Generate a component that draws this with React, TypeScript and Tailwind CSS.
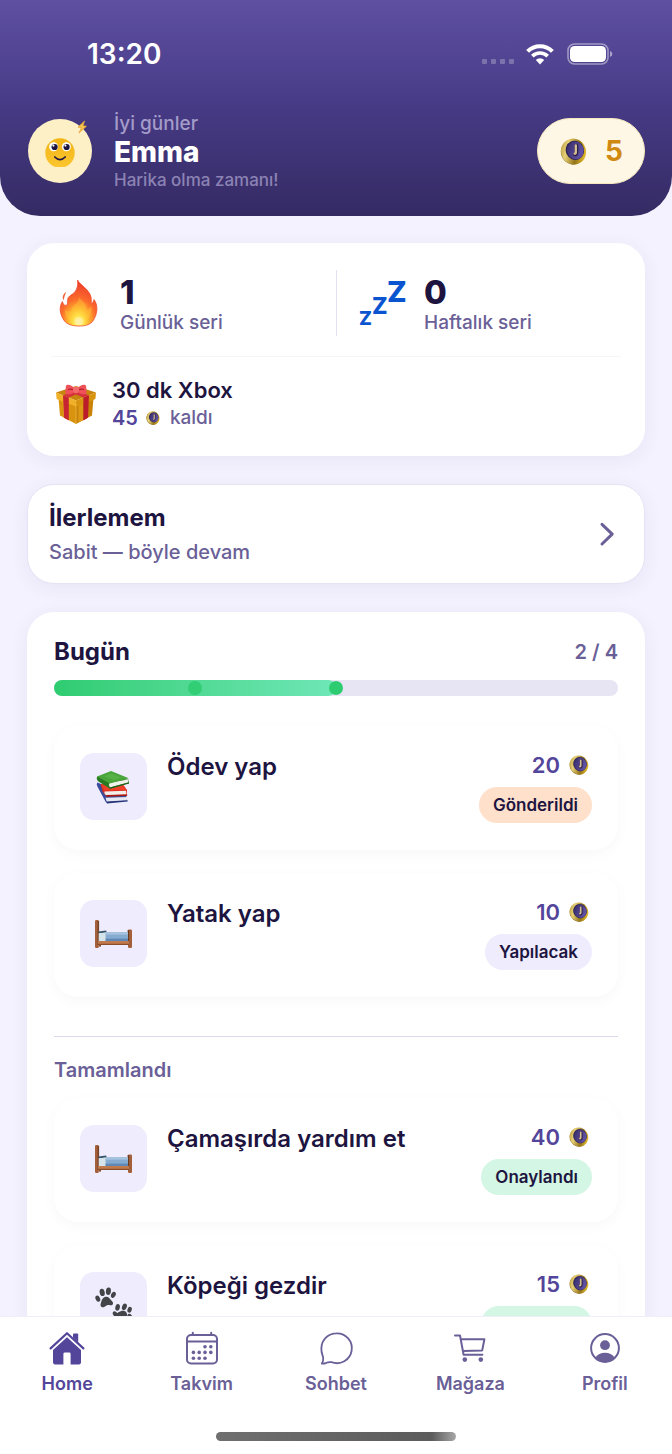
import { useId, type ReactNode } from "react";

type Status = "sent" | "todo" | "approved";

interface Task {
  id: number;
  title: string;
  coins: number;
  status: Status;
  icon: ReactNode;
}

const statusLabel: Record<Status, string> = {
  sent: "Gönderildi",
  todo: "Yapılacak",
  approved: "Onaylandı",
};

const statusColor: Record<Status, string> = {
  sent: "bg-[#fee0cb]",
  todo: "bg-[#eeecfd]",
  approved: "bg-[#d4f6e4]",
};

function Coin({ className }: { className: string }) {
  const id = useId();
  return (
    <svg viewBox="0 0 28 28" className={className} aria-hidden="true">
      <defs>
        <linearGradient id={id + "rim"} x1="0" y1="0" x2="1" y2="1">
          <stop offset="0" stopColor="#a98a2c" />
          <stop offset="0.3" stopColor="#e6cf76" />
          <stop offset="0.6" stopColor="#94741a" />
          <stop offset="0.85" stopColor="#e3bb2c" />
          <stop offset="1" stopColor="#a07c1c" />
        </linearGradient>
        <linearGradient id={id + "face"} x1="0" y1="0" x2="1" y2="1">
          <stop offset="0" stopColor="#352a68" />
          <stop offset="1" stopColor="#6c5cb4" />
        </linearGradient>
      </defs>
      <ellipse cx="13.4" cy="14.6" rx="12.4" ry="13" fill="#8a6d1e" transform="rotate(-30 13.4 14.6)" />
      <ellipse cx="14" cy="14" rx="12.8" ry="13.6" fill={`url(#${id}rim)`} transform="rotate(-30 14 14)" />
      <ellipse cx="15.4" cy="12.8" rx="9.4" ry="10" fill="#2c2354" transform="rotate(-24 15.4 12.8)" />
      <ellipse cx="15.9" cy="12.8" rx="8.6" ry="9.2" fill={`url(#${id}face)`} transform="rotate(-24 15.9 12.8)" />
      <path d="M17 8V15.4Q16.8 17.2 15.6 17" fill="none" stroke="#2a2048" strokeWidth="4" strokeLinecap="round" />
      <path d="M16.4 7.6V15Q16.2 16.4 15.2 16.2" fill="none" stroke="#d6c092" strokeWidth="2.4" strokeLinecap="round" />
    </svg>
  );
}

function Avatar() {
  return (
    <div className="relative flex size-16 shrink-0 items-center justify-center rounded-full bg-[#fdf0c6]">
      <svg viewBox="0 0 32 32" className="size-8" aria-hidden="true">
        <defs>
          <linearGradient id="face" x1="0" y1="0" x2="0" y2="1">
            <stop offset="0" stopColor="#f2b416" />
            <stop offset="1" stopColor="#fbc62f" />
          </linearGradient>
        </defs>
        <circle cx="16" cy="18" r="14.7" fill="url(#face)" />
        <circle cx="9.6" cy="11.8" r="4.5" fill="#fff" />
        <circle cx="22.4" cy="11.8" r="4.5" fill="#fff" />
        <circle cx="10.6" cy="12" r="3.1" fill="#1d1440" />
        <circle cx="22.6" cy="12" r="3.1" fill="#1d1440" />
        <circle cx="9.4" cy="10.6" r="1.1" fill="#fff" />
        <circle cx="21.4" cy="10.6" r="1.1" fill="#fff" />
        <path d="M10.8 22Q16 27.4 21.2 22" fill="none" stroke="#1d1440" strokeWidth="1.7" strokeLinecap="round" />
      </svg>
      <svg viewBox="0 0 12 14" className="absolute right-1 top-px h-3.5 w-3" aria-hidden="true">
        <path d="M8.6 1 2 7.2 5.4 7.6 3 13 10.4 6.2 6.9 5.8Z" fill="#f7c948" stroke="#e9a23b" strokeWidth="0.8" strokeLinejoin="round" />
      </svg>
    </div>
  );
}

function Flame() {
  return (
    <svg viewBox="0 0 48 48" className="size-12" aria-hidden="true">
      <defs>
        <radialGradient id="flame" cx="0.5" cy="0.9" r="0.8">
          <stop offset="0" stopColor="#fffbd0" />
          <stop offset="0.16" stopColor="#ffea4e" />
          <stop offset="0.36" stopColor="#ffb02e" />
          <stop offset="0.62" stopColor="#fb6a2b" />
          <stop offset="1" stopColor="#f0442c" />
        </radialGradient>
      </defs>
      <path d="M11.3 12.5Q6 17 8.4 21.5Q9.6 17 11.3 12.5Z" fill="#f2603a" />
      <path d="M22.6 1C24.5 6 34 9.5 36 18C36.6 21 36 24 36.5 24.6C37.8 24.4 38.4 22.5 39 20.6C43 26 43.2 34.5 37.5 42.6C33 47 28 47 24 47C17 47 12.5 45.5 9.5 42C4.5 35 4 28.5 7.3 22.5C8.2 25 9 26.6 11 26.4C14 25.5 11.6 21 13.3 18.5C15.4 15.5 19.6 15 21.4 10.5C23 7 22.7 4 22.6 1Z" fill="url(#flame)" stroke="#f04c2e" strokeWidth="0.8" />
      <path d="M24 18C27 22 31.6 24 31.6 31C35 30 36 28 36.4 27C38 36 32 44 24 45C15 44.5 9 38 10 30C12 33 14.4 33 16 31.5C17 26 24 25 24 18Z" fill="#ffd43b" opacity="0.35" />
      <ellipse cx="24" cy="42" rx="5" ry="4" fill="#fffbd8" opacity="0.4" />
    </svg>
  );
}

function Sleep() {
  return (
    <svg viewBox="0 0 48 48" className="size-12 overflow-visible" aria-hidden="true">
      <g fill="#0a55cf" fontFamily="Inter, sans-serif" fontWeight="800">
        <text x="0" y="46" fontSize="19">Z</text>
        <text x="13" y="35" fontSize="23">Z</text>
        <text x="28" y="23" fontSize="29">Z</text>
      </g>
    </svg>
  );
}

function Gift() {
  return (
    <svg viewBox="0 0 44 44" className="size-11" aria-hidden="true">
      <path d="M4.5 16 22 22.5V42L6 33.5Z" fill="#d9940f" />
      <path d="M39.5 16 22 22.5V42L38 33.5Z" fill="#c98408" />
      <path d="M8.6 18 14.4 20V38L9.4 35.3Z" fill="#e8aa22" />
      <path d="M24.5 23 29 21.2V38.2L24.5 40.6Z" fill="#dd9a17" />
      <path d="M2 10.5 22 4 42 10.5 22 18.5Z" fill="#c7850d" />
      <path d="M2 10.5 22 18.5V24.5L2.6 17Z" fill="#f0b128" />
      <path d="M42 10.5 22 18.5V24.5L41.4 17Z" fill="#d8940f" />
      <path d="M9 13.2 14.8 15.6V38.4L10 35.7Z" fill="#c62431" />
      <path d="M35 13.2 29.4 15.6V38.4L34 35.7Z" fill="#bb1d2b" />
      <path d="M9 13.2 27 6.5 32 8.2 14.8 15.6Z" fill="#d7323c" />
      <path d="M35 13.2 17 6.5 12 8.2 29.4 15.6Z" fill="#d7323c" />
      <path d="M21 7C17 1.5 12 2 11.8 4.4C12 8 10 11 13 12.2C17 13 20 10.5 21 9Z" fill="#ee5158" />
      <path d="M23 7C27 1.5 32 2 32.2 4.4C32 8 34 11 31 12.2C27 13 24 10.5 23 9Z" fill="#ee5158" />
      <path d="M14 7.5Q17 6.5 20 8M30 7.5Q27 6.5 24 8" stroke="#b8202e" strokeWidth="1.2" fill="none" />
      <rect x="19" y="4.8" width="6" height="6.4" rx="2.4" fill="#f46a6c" />
      <path d="M22 22V42" stroke="#f1b53c" strokeWidth="0.8" />
    </svg>
  );
}

function Books() {
  return (
    <svg viewBox="0 0 36 36" className="size-9" aria-hidden="true">
      <path d="M1.4 13.5Q0 15 1.4 17.5L10 33.4 31 31.5 30 25Z" fill="#3c4c9c" />
      <path d="M9.5 28.8 31.4 28 30.6 31.6 11 33.3Z" fill="#e6e8f2" />
      <path d="M10.3 32.6 31.6 31.2V32.4L11 34.4Z" fill="#263378" />
      <path d="M4.6 15 6.6 22.5 10.3 27.2 31 26.4V21L27 15.5Z" fill="#d92a20" />
      <path d="M8.4 22.5Q7.8 24.5 10 26.2L30.6 25.6 30 21.8Z" fill="#f2efea" />
      <path d="M5 15 8.4 21.8 30.4 21 27.5 16Z" fill="#ee4029" />
      <path d="M10.2 26 31.2 25.4V26.8L10.6 27.8Z" fill="#a9180f" />
      <path d="M1 7.4Q0 10 2 12.2L13.6 19.6 33 14.2 32.2 10.5Z" fill="#2a7a22" />
      <path d="M13.6 13.8Q12 16 14 18.4L32.2 13.4 31.8 10.6Z" fill="#f1f2ec" />
      <path d="M1 7.4 15 2 32.8 9.2 13.8 14.6Z" fill="#4aa53b" />
      <path d="M8.4 7.4 15.6 4.6 25.4 8.4 18 11Z" fill="#63b94f" opacity="0.6" />
      <path d="M13.8 18.6 33 13.2V14.4L13.6 20Z" fill="#1d6318" />
    </svg>
  );
}

function Bed() {
  return (
    <svg viewBox="0 0 40 30" className="h-[30px] w-10" aria-hidden="true">
      <rect x="1" y="1" width="3.8" height="28" rx="1.2" fill="#a4603a" />
      <rect x="3.5" y="2" width="1.6" height="24" fill="#7a4326" />
      <rect x="34" y="10.5" width="4" height="18.5" rx="1.2" fill="#a4603a" />
      <rect x="33.6" y="11" width="1.5" height="13" fill="#6b3b22" />
      <path d="M4.5 12.6 12 11.6 13 13.5 4.5 14.4Z" fill="#37566b" />
      <path d="M4.7 14.2 12.1 13.4V22H4.7Z" fill="#d4e4ea" />
      <rect x="11.6" y="13.2" width="22.4" height="10" fill="#86abd0" />
      <rect x="11.6" y="13.2" width="22.4" height="2.4" fill="#a6c4e0" />
      <rect x="11.6" y="19.6" width="22.4" height="3" fill="#5e89b6" />
      <rect x="4" y="22" width="31" height="3.8" fill="#c07a4c" />
      <rect x="4" y="24.8" width="31" height="1.2" fill="#8a4e2d" />
      <rect x="5" y="25" width="2" height="2.6" fill="#8a4e2d" />
    </svg>
  );
}

function Paws() {
  return (
    <svg viewBox="0 0 40 40" className="size-10" aria-hidden="true">
      <g fill="#434448">
        <ellipse cx="3.8" cy="12.6" rx="2.2" ry="3.2" transform="rotate(-25 3.8 12.6)" />
        <ellipse cx="8.2" cy="6.4" rx="2.5" ry="3.7" transform="rotate(-12 8.2 6.4)" />
        <ellipse cx="14.4" cy="5.2" rx="2.5" ry="3.7" transform="rotate(6 14.4 5.2)" />
        <ellipse cx="19.4" cy="8.8" rx="2.2" ry="3.2" transform="rotate(28 19.4 8.8)" />
        <path d="M11.5 10.8C14.6 10.2 15.6 12.6 17.4 14.4C20.4 17 19 19.6 16 19.2C13.6 18.8 12.6 19.4 10.6 20.8C8 22.4 5.6 20.2 6.8 17.2C7.8 14.6 8.2 11.6 11.5 10.8Z" />
        <g transform="translate(17.4 16.4)">
          <ellipse cx="3.8" cy="11.6" rx="2.1" ry="2.9" transform="rotate(-35 3.8 11.6)" />
          <ellipse cx="6.2" cy="5" rx="2.3" ry="3.4" transform="rotate(10 6.2 5)" />
          <ellipse cx="13" cy="4.4" rx="2.3" ry="3.4" transform="rotate(22 13 4.4)" />
          <ellipse cx="18.2" cy="7.4" rx="2.1" ry="3" transform="rotate(20 18.2 7.4)" />
          <ellipse cx="18.4" cy="14" rx="2.1" ry="2.8" transform="rotate(-40 18.4 14)" />
          <path d="M9.4 8.8C13 7.6 16 9.6 15.6 12.6C15.2 14.6 15.6 15.4 16 17.6C16 20.4 13 21 11.4 18.4C10 16.2 8 16 5.6 15.8C2.2 15.2 2 12.4 4.6 11.2C6.6 10.2 7.4 9.4 9.4 8.8Z" />
        </g>
      </g>
    </svg>
  );
}

const todayTasks: Task[] = [
  { id: 1, title: "Ödev yap", coins: 20, status: "sent", icon: <Books /> },
  { id: 2, title: "Yatak yap", coins: 10, status: "todo", icon: <Bed /> },
];

const doneTasks: Task[] = [
  { id: 3, title: "Çamaşırda yardım et", coins: 40, status: "approved", icon: <Bed /> },
  { id: 4, title: "Köpeği gezdir", coins: 15, status: "approved", icon: <Paws /> },
];

function TaskCard({ task }: { task: Task }) {
  return (
    <li className="flex items-start rounded-3xl bg-white px-[26px] py-[27px] shadow-[0_4px_14px_rgba(0,0,0,0.03)]">
      <div className="flex size-[67px] shrink-0 items-center justify-center rounded-[14px] bg-[#eeecfd]">
        {task.icon}
      </div>
      <h3 className="ml-5 flex-1 text-2xl leading-7 font-semibold text-[#1d1440]">{task.title}</h3>
      <div className="flex flex-col items-end">
        <div className="flex h-6 items-center gap-[9px] pr-[3px] text-[22px] font-semibold text-[#53459a]">
          {task.coins}
          <Coin className="size-5" />
        </div>
        <span className={`mt-[10px] rounded-full px-[14px] py-1.5 text-[17px] leading-6 font-semibold text-[#1d1440] ${statusColor[task.status]}`}>
          {statusLabel[task.status]}
        </span>
      </div>
    </li>
  );
}

function StatusBar() {
  return (
    <div className="flex h-[108px] items-center justify-between pr-[59px] pl-[87px]">
      <span className="text-[28px] leading-8 font-semibold text-white">13:20</span>
      <div className="flex items-center">
        <div className="mt-[14px] mr-3 flex gap-1">
          {[0, 1, 2, 3].map((dot) => (
            <span key={dot} className="h-[5px] w-[5px] rounded-[1px] bg-white/25" />
          ))}
        </div>
        <svg viewBox="0 0 28 21" className="mr-[13px] h-[21px] w-7" fill="none" stroke="#fff" aria-hidden="true">
          <path d="M1.6 7.4A17.6 17.6 0 0 1 26.4 7.4" strokeWidth="4" />
          <path d="M6.3 12.1A11 11 0 0 1 21.7 12.1" strokeWidth="3.6" />
          <path d="M9.8 16A6 6 0 0 1 18.2 16L14 20.4Z" fill="#fff" stroke="none" />
        </svg>
        <svg viewBox="0 0 46 22" className="h-[22px] w-[46px]" aria-hidden="true">
          <rect x="1" y="1" width="40" height="20" rx="6.5" fill="none" stroke="#fff" strokeOpacity="0.45" strokeWidth="1.6" />
          <rect x="3" y="3" width="36" height="16" rx="4.6" fill="#fff" />
          <path d="M43 8Q45.4 9 45.4 11T43 14Z" fill="#fff" fillOpacity="0.5" />
        </svg>
      </div>
    </div>
  );
}

function HomeIcon() {
  return (
    <svg viewBox="0 0 36 36" className="size-9" aria-hidden="true">
      <path d="M1.6 18.4 18 3.2 34.4 18.4" fill="none" stroke="currentColor" strokeWidth="2.2" strokeLinecap="round" strokeLinejoin="round" />
      <path d="M24 4.6Q24 3.6 25 3.6H28.2Q29.2 3.6 29.2 4.6V12.4L24 7.6Z" fill="currentColor" />
      <path d="M18 7.2 32 20V32.6Q32 34.4 30.2 34.4H21.6V24Q21.6 22.6 20.2 22.6H15.8Q14.4 22.6 14.4 24V34.4H5.8Q4 34.4 4 32.6V20Z" fill="currentColor" />
    </svg>
  );
}

function CalendarIcon() {
  return (
    <svg viewBox="0 0 36 36" className="size-9" fill="none" stroke="currentColor" strokeWidth="2" aria-hidden="true">
      <rect x="3" y="5" width="30" height="28.4" rx="4" />
      <path d="M3 11.4H33M8.8 5V2.8M27.2 5V2.8" strokeLinecap="round" />
      <g fill="currentColor" stroke="none">
        <circle cx="21" cy="16.8" r="1.8" />
        <circle cx="26.8" cy="16.8" r="1.8" />
        <circle cx="9.4" cy="22.4" r="1.8" />
        <circle cx="15.2" cy="22.4" r="1.8" />
        <circle cx="21" cy="22.4" r="1.8" />
        <circle cx="26.8" cy="22.4" r="1.8" />
        <circle cx="9.4" cy="28.2" r="1.8" />
        <circle cx="15.2" cy="28.2" r="1.8" />
        <circle cx="21" cy="28.2" r="1.8" />
      </g>
    </svg>
  );
}

function ChatIcon() {
  return (
    <svg viewBox="0 0 36 36" className="size-9" fill="none" stroke="currentColor" strokeWidth="1.8" strokeLinejoin="round" aria-hidden="true">
      <path d="M18.4 3.4A14.9 14.9 0 1 1 13.6 32.2Q10.6 31.8 8.4 32.8Q6 33.8 3.8 33.6Q5.6 31 5.2 27.8C5 26 2.9 22.6 3.4 18.2A15 15 0 0 1 18.4 3.4Z" />
    </svg>
  );
}

function CartIcon() {
  return (
    <svg viewBox="0 0 36 36" className="size-9" fill="none" stroke="currentColor" strokeWidth="2" strokeLinecap="round" strokeLinejoin="round" aria-hidden="true">
      <path d="M3 5.4H8L11.6 24.8H30.4" />
      <path d="M8.8 9.2H32.4L30.2 20.4 11 21" />
      <circle cx="12.8" cy="29.6" r="2.3" fill="currentColor" stroke="none" />
      <circle cx="28.8" cy="29.6" r="2.3" fill="currentColor" stroke="none" />
    </svg>
  );
}

function ProfileIcon() {
  return (
    <svg viewBox="0 0 36 36" className="size-9" aria-hidden="true">
      <circle cx="18" cy="18" r="13.9" fill="none" stroke="currentColor" strokeWidth="2" />
      <circle cx="18" cy="15.2" r="4.9" fill="currentColor" />
      <path d="M8.4 27.6Q11.6 22.8 18 22.8T27.6 27.6Q23.8 31.8 18 31.8T8.4 27.6Z" fill="currentColor" />
    </svg>
  );
}

const tabs = [
  { label: "Home", icon: <HomeIcon />, active: true },
  { label: "Takvim", icon: <CalendarIcon />, active: false },
  { label: "Sohbet", icon: <ChatIcon />, active: false },
  { label: "Mağaza", icon: <CartIcon />, active: false },
  { label: "Profil", icon: <ProfileIcon />, active: false },
];

function Header() {
  return (
    <header className="shrink-0 rounded-b-[40px] bg-linear-to-b from-[#5f50a2] via-[#463a85] to-[#352b63] pb-[22px]">
      <StatusBar />
      <div className="flex h-[86px] items-center pr-[27px] pl-7">
        <Avatar />
        <div className="ml-[22px] flex-1 pt-0.5">
          <p className="text-[19px] leading-6 font-medium text-[#a49cc9]">İyi günler</p>
          <h1 className="text-[28px] leading-8 font-extrabold text-white">Emma</h1>
          <p className="text-[17px] leading-6 font-medium text-[#8c83b4]">Harika olma zamanı!</p>
        </div>
        <div className="flex h-[66px] items-center gap-[18px] rounded-full border border-[#f6e7bd] bg-[#fef7e6] pr-[21px] pl-[22px]">
          <Coin className="size-[27px]" />
          <span className="text-[28px] leading-8 font-bold text-[#d08a12]">5</span>
        </div>
      </div>
    </header>
  );
}

function Streak({ icon, value, label }: { icon: ReactNode; value: number; label: string }) {
  return (
    <div className="flex flex-1 items-center">
      {icon}
      <div className="ml-[17px] pt-1">
        <p className="text-[33px] leading-9 font-extrabold text-[#1d1440]">{value}</p>
        <p className="text-[19px] leading-[26px] font-medium text-[#6a5f97]">{label}</p>
      </div>
    </div>
  );
}

export default function App() {
  const done = 2;
  const total = 4;

  return (
    <div className="flex h-screen flex-col bg-[#f4f2fe] font-['Inter',sans-serif]">
      <Header />

      <main className="min-h-0 flex-1 overflow-y-auto px-[27px] pt-[27px] [scrollbar-width:none]">
        <section className="rounded-[27px] bg-white px-6 pt-[27px] shadow-[0_4px_18px_rgba(83,69,154,0.08)]">
          <div className="grid grid-cols-2 pb-5">
            <div className="flex pl-1">
              <Streak icon={<Flame />} value={1} label="Günlük seri" />
            </div>
            <div className="flex h-[66px] border-l border-[#e3e0f0] pl-[22px]">
              <Streak icon={<Sleep />} value={0} label="Haftalık seri" />
            </div>
          </div>
          <div className="flex items-center border-t border-[#f5f4f9] pt-[19px] pb-6 pl-[3px]">
            <Gift />
            <div className="ml-[14px]">
              <p className="text-[22px] leading-7 font-semibold text-[#1d1440]">30 dk Xbox</p>
              <p className="flex items-center text-[19px] leading-7 font-medium text-[#6a5f97]">
                <span className="text-xl leading-7 font-semibold text-[#53459a]">45</span>
                <Coin className="mr-[10px] ml-2 size-[14px]" />
                kaldı
              </p>
            </div>
          </div>
        </section>

        <button className="mt-7 flex w-full cursor-pointer items-center justify-between rounded-[27px] border border-[#e6e3f3] bg-white px-[21px] py-[17px] text-left shadow-[0_4px_18px_rgba(83,69,154,0.08)]">
          <span>
            <span className="block text-2xl leading-8 font-bold text-[#1d1440]">İlerlemem</span>
            <span className="block pt-1 text-xl leading-7 font-medium text-[#6a5f97]">Sabit — böyle devam</span>
          </span>
          <svg viewBox="0 0 32 32" className="size-8" fill="none" stroke="#6a5f97" strokeWidth="3" strokeLinecap="round" strokeLinejoin="round" aria-hidden="true">
            <path d="M11 6.4 21.2 16.2 11 26" />
          </svg>
        </button>

        <section className="mt-7 rounded-[27px] bg-white p-[27px] pt-6 shadow-[0_4px_18px_rgba(83,69,154,0.08)]">
          <div className="flex items-center justify-between">
            <h2 className="text-2xl leading-8 font-bold text-[#1d1440]">Bugün</h2>
            <span className="text-xl font-semibold text-[#6a5f97]">
              {done} / {total}
            </span>
          </div>

          <div className="relative mt-3 h-4 rounded-full bg-[#e7e4f4]">
            <div
              className="h-full rounded-full bg-linear-to-r from-[#2ecc71] to-[#6ee7b7]"
              style={{ width: `${(done / total) * 100}%` }}
            />
            {[1, 2].map((step) => (
              <span
                key={step}
                className={`absolute top-px size-[14px] -translate-x-1/2 rounded-full bg-[#2ecc71] ${step < done ? "opacity-90" : ""}`}
                style={{ left: `${(step / total) * 100}%` }}
              />
            ))}
          </div>

          <ul className="mt-[30px] flex flex-col gap-[23px]">
            {todayTasks.map((task) => (
              <TaskCard key={task.id} task={task} />
            ))}
          </ul>

          <h2 className="mt-[39px] border-t border-[#dedaee] pt-[19px] text-xl leading-7 font-semibold text-[#6a5f97]">
            Tamamlandı
          </h2>
          <ul className="mt-[14px] flex flex-col gap-[23px]">
            {doneTasks.map((task) => (
              <TaskCard key={task.id} task={task} />
            ))}
          </ul>
        </section>
      </main>

      <nav className="relative shrink-0 border-t border-[#f0eef6] bg-white">
        <div className="flex h-[115px] pt-[13px]">
          {tabs.map((tab) => (
            <a
              key={tab.label}
              href="#"
              className={`flex flex-1 flex-col items-center gap-1 text-lg leading-7 font-semibold ${tab.active ? "text-[#53459a]" : "text-[#6a5f97]"}`}
            >
              {tab.icon}
              {tab.label}
            </a>
          ))}
        </div>
        <div className="mx-auto mb-[13px] h-[9px] w-[240px] rounded-full bg-linear-to-r from-[#6f6f6f] via-[#5c5c5c] via-90% to-[#a8a8a8]" />
      </nav>
    </div>
  );
}
